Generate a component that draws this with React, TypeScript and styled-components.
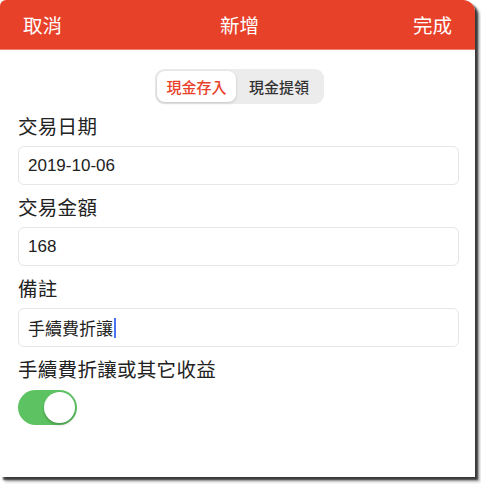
import { useState } from "react";
import styled, { createGlobalStyle } from "styled-components";

const GlobalStyle = createGlobalStyle`
  html, body {
    margin: 0;
    padding: 0;
    background: #ffffff;
    min-height: 100vh;
  }
  body {
    font-family: "Liberation Sans", "Noto Sans CJK TC", sans-serif;
    -webkit-font-smoothing: antialiased;
  }
`;

const RED = "#e8412a";

export default function App() {
  const [tab, setTab] = useState<"in" | "out">("in");
  const [withFee, setWithFee] = useState(true);

  return (
    <>
      <GlobalStyle />
      <Page>
        <Screen>
          <NavBar>
            <NavButton>取消</NavButton>
            <NavTitle>新增</NavTitle>
            <NavButton>完成</NavButton>
          </NavBar>

          <Body>
            <SegmentRow>
              <Segmented>
                <SegmentItem $active={tab === "in"} onClick={() => setTab("in")}>
                  現金存入
                </SegmentItem>
                <SegmentItem $active={tab === "out"} onClick={() => setTab("out")}>
                  現金提領
                </SegmentItem>
              </Segmented>
            </SegmentRow>

            <Label>交易日期</Label>
            <Field>2019-10-06</Field>

            <Label>交易金額</Label>
            <Field>168</Field>

            <Label>備註</Label>
            <Field>
              手續費折讓
              <Caret />
            </Field>

            <Label>手續費折讓或其它收益</Label>
            <Switch $on={withFee} onClick={() => setWithFee((v) => !v)}>
              <Knob $on={withFee} />
            </Switch>
          </Body>
        </Screen>
      </Page>
    </>
  );
}

/** styles */

const Page = styled.div`
  width: 481px;
  height: 484px;
`;

const Screen = styled.div`
  width: 475px;
  height: 477px;
  background: #ffffff;
  border-radius: 6px 12px 0 0;
  overflow: hidden;
  box-shadow: 3px 3px 2px rgba(0, 0, 0, 0.7), 5px 5px 3px rgba(0, 0, 0, 0.25);
`;

const NavBar = styled.div`
  height: 50px;
  background: ${RED};
  display: flex;
  align-items: center;
  justify-content: space-between;
  padding: 0 23px;
  box-sizing: border-box;
  border-bottom: 1px solid #f0806f;
`;

const NavButton = styled.div`
  color: #ffffff;
  font-family: "Noto Sans CJK TC", sans-serif;
  font-size: 19.5px;
  line-height: 26px;
`;

const NavTitle = styled(NavButton)`
  margin-left: 4px;
`;

const Body = styled.div`
  padding: 0 17px 0 18px;
  display: flex;
  flex-direction: column;
`;

const SegmentRow = styled.div`
  display: flex;
  justify-content: center;
  padding-top: 19px;
  padding-left: 3px;
`;

const Segmented = styled.div`
  display: flex;
  background: #ececec;
  border-radius: 9px;
  padding: 2px;
  height: 35px;
  box-sizing: border-box;
`;

const SegmentItem = styled.div<{ $active: boolean }>`
  width: 79px;
  display: flex;
  align-items: center;
  justify-content: center;
  border-radius: 8px;
  font-family: "Noto Sans CJK TC", sans-serif;
  font-size: 15px;
  font-weight: 500;
  cursor: pointer;
  color: ${(p) => (p.$active ? RED : "#333333")};
  background: ${(p) => (p.$active ? "#ffffff" : "transparent")};
  box-shadow: ${(p) => (p.$active ? "0 1px 3px rgba(0, 0, 0, 0.18)" : "none")};
  & + & {
    width: 86px;
  }
`;

const Label = styled.div`
  margin-top: 9px;
  margin-bottom: 7px;
  font-family: "Noto Sans CJK TC", sans-serif;
  font-size: 19.5px;
  line-height: 26px;
  color: #222222;
  letter-spacing: 0.3px;
`;

const Field = styled.div`
  height: 39px;
  box-sizing: border-box;
  border: 1px solid #e6e6e6;
  border-radius: 6px;
  padding-left: 9px;
  display: flex;
  align-items: center;
  font-family: "Liberation Sans", "Noto Sans CJK TC", sans-serif;
  font-size: 17px;
  color: #222222;
  width: 441px;
`;

const Caret = styled.span`
  display: inline-block;
  width: 2px;
  height: 20px;
  margin-left: 1px;
  background: #4a74f0;
`;

const Switch = styled.div<{ $on: boolean }>`
  margin-top: 1px;
  width: 59px;
  height: 35px;
  border-radius: 18px;
  box-sizing: border-box;
  padding: 2px;
  background: ${(p) => (p.$on ? "#5dc261" : "#e5e5e5")};
  display: flex;
  justify-content: ${(p) => (p.$on ? "flex-end" : "flex-start")};
  cursor: pointer;
`;

const Knob = styled.div<{ $on: boolean }>`
  width: 31px;
  height: 31px;
  border-radius: 50%;
  background: #ffffff;
  box-shadow: 0 2px 3px rgba(0, 0, 0, 0.2);
`;
